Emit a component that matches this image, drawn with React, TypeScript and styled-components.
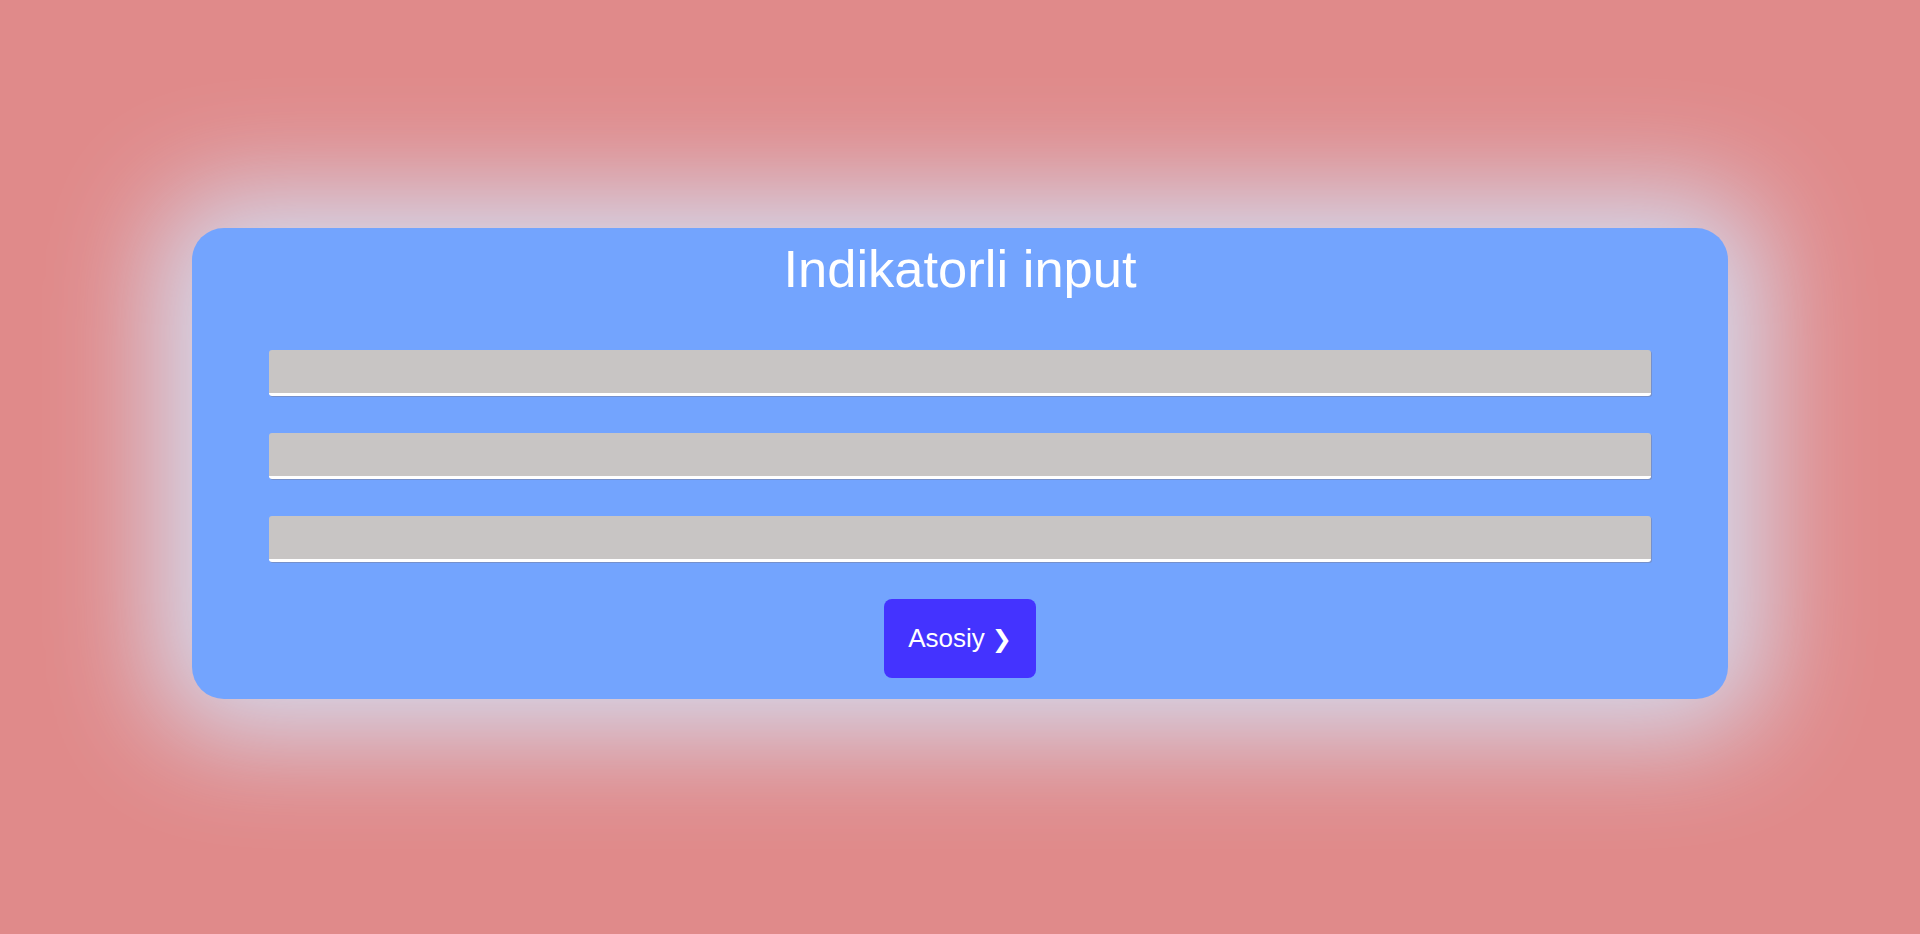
import React from "react";
import styled, { createGlobalStyle } from "styled-components";

const GlobalStyle = createGlobalStyle`
  html, body {
    margin: 0;
    padding: 0;
    background: #e08a8a;
    font-family: "Liberation Sans", Arial, sans-serif;
  }
  #root {
    min-height: 934px;
  }
`;

const Page = styled.div`
  min-height: 934px;
  display: flex;
  justify-content: center;
  align-items: flex-start;
  padding-top: 228px;
  box-sizing: border-box;
  background: #e08a8a;
`;

const Card = styled.div`
  width: 80%;
  box-sizing: border-box;
  background: #73a4fe;
  border-radius: 32px;
  box-shadow: 0 0 110px 36px #d4dcf0;
  padding: 14px 0 21px;
  display: flex;
  flex-direction: column;
  align-items: center;
  gap: 37px;
`;

const Title = styled.h1`
  margin: 0 0 17px;
  color: #ffffff;
  font-weight: 400;
  font-size: 52.5px;
  line-height: 54px;
`;

const Field = styled.input`
  width: 90%;
  height: 46px;
  box-sizing: border-box;
  border: none;
  border-bottom: 3px solid #ffffff;
  border-radius: 3px;
  background: #c8c5c4;
  box-shadow: 1px 1px 0 rgba(120, 110, 110, 0.35);
  outline: none;
  font-family: "Liberation Sans", Arial, sans-serif;
  font-size: 18px;
  padding: 0 12px;
`;

const Button = styled.button`
  height: 79px;
  padding: 0 24px;
  border: none;
  border-radius: 8px;
  background: #4433ff;
  color: #ffffff;
  font-family: "Liberation Sans", "DejaVu Sans", Arial, sans-serif;
  font-size: 26px;
  cursor: pointer;
  display: flex;
  align-items: center;
  gap: 7px;
`;

const Chevron = styled.span`
  font-family: "DejaVu Sans", sans-serif;
  font-size: 24px;
  font-weight: 700;
`;

export default function App() {
  return (
    <>
      <GlobalStyle />
      <Page>
        <Card>
          <Title>Indikatorli input</Title>
          <Field type="text" />
          <Field type="text" />
          <Field type="text" />
          <Button>
            Asosiy<Chevron>❯</Chevron>
          </Button>
        </Card>
      </Page>
    </>
  );
}
